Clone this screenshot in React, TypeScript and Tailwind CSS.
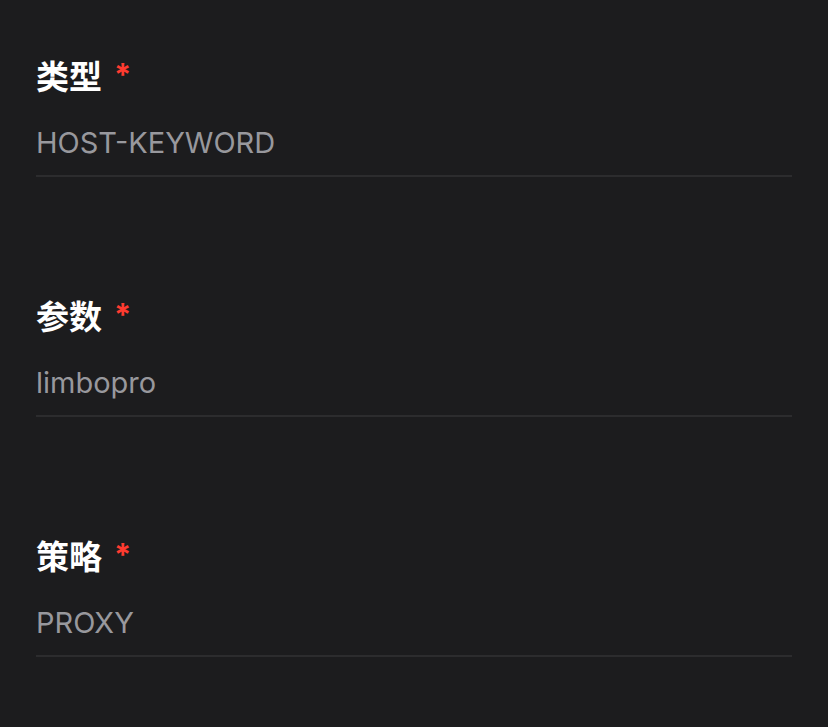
import React from "react";

const fields = [
  { label: "类型", value: "HOST-KEYWORD" },
  { label: "参数", value: "limbopro" },
  { label: "策略", value: "PROXY" },
];

export default function App() {
  return (
    <div
      className="w-[828px] h-[727px] bg-[#1c1c1e] px-[36px] pt-[55px] overflow-hidden"
      style={{ fontFamily: 'Inter, "Noto Sans CJK SC", sans-serif' }}
    >
      <div className="flex flex-col gap-[118px]">
        {fields.map((f) => (
          <div key={f.label} className="flex flex-col">
            <div className="flex items-start h-[44px]">
              <span className="text-[33px] leading-[44px] font-semibold text-white">{f.label}</span>
              <span className="ml-[12px] text-[31px] leading-[40px] font-bold text-[#ff3b30]">*</span>
            </div>
            <div className="mt-[21px] h-[46px] text-[29px] leading-[46px] text-[#98989d]">{f.value}</div>
            <div className="mt-[9px] h-[2px] bg-[#2c2c2e]" />
          </div>
        ))}
      </div>
    </div>
  );
}
